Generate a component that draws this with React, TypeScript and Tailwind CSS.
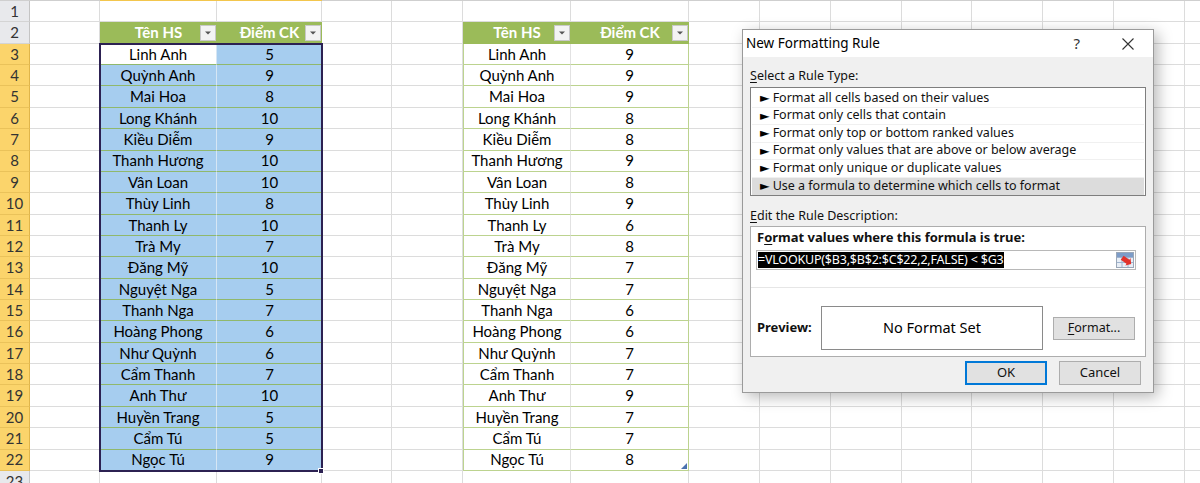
import React from 'react';

const ROWH = 21.37;
const COLS = [30, 70, 117, 105, 70, 71, 108, 118, 71, 71, 71, 70, 71, 71, 71, 71];

const t1: [string, number][] = [
  ['Linh Anh', 5], ['Quỳnh Anh', 9], ['Mai Hoa', 8], ['Long Khánh', 10], ['Kiều Diễm', 9],
  ['Thanh Hương', 10], ['Vân Loan', 10], ['Thùy Linh', 8], ['Thanh Ly', 10], ['Trà My', 7],
  ['Đăng Mỹ', 10], ['Nguyệt Nga', 5], ['Thanh Nga', 7], ['Hoàng Phong', 6], ['Như Quỳnh', 6],
  ['Cẩm Thanh', 7], ['Anh Thư', 10], ['Huyền Trang', 5], ['Cẩm Tú', 5], ['Ngọc Tú', 9],
];
const t2Scores = [9, 9, 9, 8, 8, 9, 8, 9, 6, 8, 7, 7, 6, 6, 7, 7, 9, 7, 7, 8];

const cellFont = { fontFamily: 'Lato, "Noto Sans", sans-serif' };
const uiFont = { fontFamily: '"Noto Sans", "Open Sans", sans-serif' };

function FilterBtn() {
  return (
    <span className="absolute right-[1px] top-1/2 -translate-y-1/2 w-[16px] h-[16px] bg-[#f3f3f3] border border-[#c8c8c8] flex items-center justify-center">
      <svg width="8" height="6" viewBox="0 0 8 6">
        <path d="M1 1.5 L7 1.5 L4 4.5 Z" fill="#555" />
      </svg>
    </span>
  );
}

function Cell({ row, col }: { row: number; col: number }) {
  const w = COLS[col];
  const base = 'relative shrink-0 h-full flex items-center justify-center text-[15px] text-black border-r border-b border-[#dcdcdc]';
  // row header
  if (col === 0) {
    const sel = row >= 3 && row <= 22;
    return (
      <div
        style={{ width: w }}
        className={
          sel
            ? 'shrink-0 h-full flex items-center justify-center text-[15px] text-[#333] bg-[#fbd46b] border-r border-[#e0b54a] border-b border-b-[#eac25a]'
            : 'shrink-0 h-full flex items-center justify-center text-[15px] text-[#333] bg-[#e8e9ec] border-r border-[#c4c4c4] border-b border-b-[#d4d4d4]'
        }
      >
        {row}
      </div>
    );
  }
  if (row === 2 && (col === 2 || col === 3 || col === 6 || col === 7)) {
    const label = col === 2 || col === 6 ? 'Tên HS' : 'Điểm CK';
    return (
      <div style={{ width: w }} className="relative shrink-0 h-full flex items-center justify-center text-[15px] font-bold text-white bg-[#9bbb59] border-b border-[#9bbb59]">
        {label}
        <FilterBtn />
      </div>
    );
  }
  if (row >= 3 && row <= 22) {
    const i = row - 3;
    if (col === 2 || col === 3) {
      const active = row === 3 && col === 2;
      return (
        <div
          style={{ width: w }}
          className={
            (active ? 'bg-white ' : 'bg-[#a6cdef] ') +
            'relative shrink-0 h-full flex items-center justify-center text-[15px] text-black border-b border-[#90b86c] ' +
            (col === 2 ? 'border-r border-r-[#d6e6f4]' : '')
          }
        >
          {col === 2 ? t1[i][0] : t1[i][1]}
        </div>
      );
    }
    if (col === 6 || col === 7) {
      return (
        <div
          style={{ width: w }}
          className={
            'relative shrink-0 h-full flex items-center justify-center text-[15px] text-black bg-white border-b border-[#bcd38f] ' +
            (col === 6 ? 'border-l border-l-[#bcd38f] border-r border-r-[#e2e2e2]' : 'border-r border-r-[#bcd38f]')
          }
        >
          {col === 6 ? t1[i][0] : t2Scores[i]}
          {row === 22 && col === 7 && (
            <svg className="absolute right-[1px] bottom-[1px]" width="6" height="6" viewBox="0 0 6 6">
              <path d="M6 0 L6 6 L0 6 Z" fill="#4a73b0" />
            </svg>
          )}
        </div>
      );
    }
  }
  return <div style={{ width: w }} className={base} />;
}

function SheetRow({ row }: { row: number }) {
  return (
    <div className="flex shrink-0" style={{ height: ROWH }}>
      {COLS.map((_, c) => (
        <Cell key={c} row={row} col={c} />
      ))}
    </div>
  );
}

function RangeIcon() {
  return (
    <svg width="18" height="16" viewBox="0 0 18 16">
      <rect x="0.5" y="0.5" width="17" height="15" fill="#e8eef6" stroke="#9aa7b8" />
      <path d="M1 5.5 H17 M1 10.5 H17 M6 1 V15 M12 1 V15" stroke="#9fb4d0" strokeWidth="1" />
      <rect x="1" y="1" width="16" height="4" fill="#7d9cc8" />
      <path d="M5 6 L12 6 L12 4 L16 8.5 L12 13 L12 11 L5 11 Z" fill="#e2322b" transform="rotate(35 10 9)" />
    </svg>
  );
}

const rules = [
  'Format all cells based on their values',
  'Format only cells that contain',
  'Format only top or bottom ranked values',
  'Format only values that are above or below average',
  'Format only unique or duplicate values',
  'Use a formula to determine which cells to format',
];

function Dialog() {
  return (
    <div
      style={uiFont}
      className="absolute left-[742px] top-[29px] w-[412px] h-[364px] bg-[#f0f0f0] border border-[#9a9a9a] shadow-[4px_4px_14px_rgba(0,0,0,0.28)] flex flex-col text-[12.5px] text-[#111]"
    >
      <div className="h-[27px] bg-white flex items-center pl-[3px] shrink-0">
        <span className="text-[13.5px] text-black">New Formatting Rule</span>
        <span className="ml-auto mr-[42px] text-[15px] text-[#333]">?</span>
        <svg className="mr-[19px]" width="12" height="12" viewBox="0 0 12 12">
          <path d="M0.5 0.5 L11.5 11.5 M11.5 0.5 L0.5 11.5" stroke="#333" strokeWidth="1.1" />
        </svg>
      </div>
      <div className="px-[7px] flex flex-col">
        <div className="mt-[10px] leading-[18px]">
          <span className="underline underline-offset-2">S</span>elect a Rule Type:
        </div>
        <div className="mt-[2px] h-[109px] border border-[#7e7e7e] bg-white pt-[2px] px-[1px] flex flex-col">
          {rules.map((r, i) => (
            <div
              key={i}
              className={
                'h-[17.5px] flex items-center pl-[8px] shrink-0 ' +
                (i === 5 ? 'bg-[#dcdcdc]' : 'border-b border-[#f0f0f0]')
              }
            >
              <span className="text-[12.5px] leading-none mr-[3px] text-black" style={{ fontFamily: '"DejaVu Sans", sans-serif' }}>►</span>
              <span>{r}</span>
            </div>
          ))}
        </div>
        <div className="mt-[11px] leading-[18px]">
          <span className="underline underline-offset-2">E</span>dit the Rule Description:
        </div>
        <div className="mt-[1px] h-[131px] border border-[#adadad] bg-white flex flex-col">
          <div className="pl-[6px] pt-[1px] font-bold text-[13px] leading-[18px]">
            F<span className="underline underline-offset-2">o</span>rmat values where this formula is true:
          </div>
          <div className="ml-[5px] mt-[4px] w-[380px] h-[20px] border border-[#b8b8b8] bg-white flex items-center">
            <span className="bg-black text-white text-[12.5px] leading-[16px] ml-[1px] tracking-[-0.2px]">
              =VLOOKUP($B3,$B$2:$C$22,2,FALSE) &lt; $G3
            </span>
            <span className="ml-auto mr-[1px] flex items-center">
              <RangeIcon />
            </span>
          </div>
          <div className="mt-[17px] border-t border-[#e6e6e6]" />
          <div className="flex items-center mt-[18px] pl-[6px]">
            <span className="font-bold text-[13px] w-[64px]">Preview:</span>
            <div className="w-[222px] h-[44px] border border-[#8a8a8a] flex items-center justify-center text-[14.5px] text-black">
              No Format Set
            </div>
            <div className="ml-[10px] w-[82px] h-[23px] bg-[#e1e1e1] border border-[#adadad] flex items-center justify-center">
              <span className="underline underline-offset-2">F</span>ormat...
            </div>
          </div>
        </div>
        <div className="flex justify-end mt-[4px] mr-[5px] gap-[12px]">
          <div className="w-[82px] h-[24px] bg-[#e1e1e1] border-2 border-[#0078d7] flex items-center justify-center text-[13px]">
            OK
          </div>
          <div className="w-[82px] h-[24px] bg-[#e1e1e1] border border-[#adadad] flex items-center justify-center text-[13px]">
            Cancel
          </div>
        </div>
      </div>
    </div>
  );
}

export default function App() {
  const rows = Array.from({ length: 23 }, (_, i) => i + 1);
  return (
    <div className="relative w-[1200px] h-[483px] overflow-hidden bg-white" style={cellFont}>
      <div className="flex h-[1px] shrink-0">
        <div className="w-[100px] bg-[#cfcfcf]" />
        <div className="w-[222px] bg-[#f3c64d]" />
        <div className="flex-1 bg-[#cfcfcf]" />
      </div>
      {rows.map((r) => (
        <SheetRow key={r} row={r} />
      ))}
      {/* selection border B3:C22 */}
      <div
        className="absolute left-[99px] border-2 border-[#2c2152] pointer-events-none"
        style={{ top: 1 + 2 * ROWH - 1, width: 224, height: 20 * ROWH + 2 }}
      />
      <div className="absolute left-[318px] w-[6px] h-[6px] bg-[#2c2152] border border-white" style={{ top: 1 + 22 * ROWH - 3 }} />
      <Dialog />
    </div>
  );
}
